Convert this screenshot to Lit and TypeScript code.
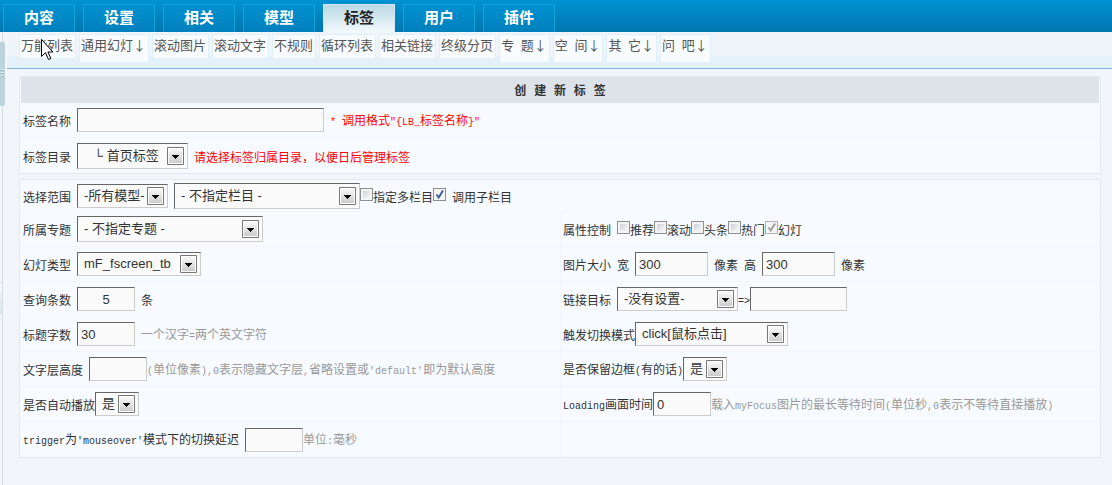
import { LitElement, html, css, svg } from "lit";
import { customElement, state } from "lit/decorators.js";
import { classMap } from "lit/directives/class-map.js";

const NAV = ["内容", "设置", "相关", "模型", "标签", "用户", "插件"];
const SUB = ["万能列表", "通用幻灯↓", "滚动图片", "滚动文字", "不规则", "循环列表", "相关链接", "终级分页", "专 题↓", "空 间↓", "其 它↓", "问 吧↓"];
const FLAGS = ["推荐", "滚动", "头条", "热门", "幻灯"];

const mix = (text: string) =>
  text.split(/([\x20-\x7e]+)/).filter(Boolean).map((run) =>
    /^[\x20-\x7e]+$/.test(run) ? html`<span class="mono">${run}</span>` : run);

@customElement("app-root")
export class AppRoot extends LitElement {
  static styles = css`
    :host {
      display: block;
      min-height: 100vh;
      background: #f2f6fb;
      color: #333;
      font: 12px/16px "Noto Sans CJK SC", sans-serif;
    }
    * { box-sizing: border-box; }
    .mono { font-family: "Liberation Mono", monospace; font-size: 10px; white-space: pre; }
    .top {
      display: flex;
      gap: 8px;
      height: 32px;
      padding: 4px 3px 0;
      background: linear-gradient(#0092d2, #0077b0);
    }
    .tab {
      width: 72px;
      height: 28px;
      border: 1px solid #10a3dc;
      border-bottom: 0;
      background: linear-gradient(#0090d0, #0080bc);
      color: #fff;
      font-size: 15px;
      font-weight: 700;
      line-height: 24px;
      text-align: center;
      text-decoration: none;
    }
    .tab.on {
      border-color: #d4e8f0;
      background: linear-gradient(#b9d9e4, #f3f8fc);
      color: #222;
    }
    .body { display: flex; min-height: calc(100vh - 32px); }
    .rail {
      position: relative;
      flex: none;
      width: 7px;
      background: linear-gradient(90deg, #f2f6fb 2px, #d5dde3 2px, #d5dde3 3px, #f2f6fb 3px);
    }
    .thumb {
      position: absolute;
      left: 0;
      top: 10px;
      width: 5px;
      height: 64px;
      border-radius: 0 2px 2px 0;
      background:
        repeating-linear-gradient(#e6f0f3 0 1px, #9fb9c2 1px 2px, #bdd3da 2px 3px) 1px 27px / 3px 8px no-repeat,
        #bdd3da;
    }
    .stub {
      position: absolute;
      left: 0;
      top: 250px;
      width: 2px;
      height: 32px;
      border: solid #d5dde3;
      border-width: 1px 0;
      background: linear-gradient(#f4f8fb, #dde6ea);
    }
    .main { flex: 1; min-width: 0; }
    .sub {
      display: flex;
      align-items: flex-start;
      gap: 3px;
      height: 37px;
      padding: 2px 12px 0;
      border-bottom: 1px solid #7db4d5;
      background: linear-gradient(#f0f5fc 24px, #e4f1fb 24px);
    }
    .sub a {
      height: 25px;
      padding: 0 2px 0 1px;
      border: 1px solid #e0f0fa;
      background: #f9fcff;
      color: #555;
      font-size: 13px;
      line-height: 20px;
      white-space: nowrap;
      text-decoration: none;
    }
    .sub a.menu { height: 29px; }
    .sub .mono { font-size: 11px; }
    form { padding: 7px 11px 0 12px; }
    .panel {
      margin-bottom: 5px;
      border: 1px solid #e2eaf0;
      background: #f7fbff;
    }
    h1 {
      margin: 0 1px;
      background: #dce3e9;
      font-size: 12px;
      line-height: 26px;
      text-align: center;
    }
    h1 .mono { font-size: 13px; line-height: 16px; }
    .row {
      display: grid;
      grid-template-columns: 1fr 1fr;
      height: 35px;
      border-bottom: 1px solid #f2f6fb;
    }
    .row:last-child { border-bottom: 0; }
    .row.wide { grid-template-columns: 1fr; }
    .row.short { height: 32px; }
    .cell { display: flex; align-items: center; padding-left: 3px; white-space: nowrap; }
    .cell + .cell { padding-left: 2px; border-left: 1px solid #f2f6fb; }
    .cell > label, .cell > .txt { padding-top: 2px; }
    .gap { margin-right: 6px; }
    .lead { margin-left: 6px; }
    .red { color: #f00; }
    .grey { color: #999; }
    input, select {
      margin: 0;
      border: 1px solid;
      border-color: #666 #ccc #ccc #666;
      border-radius: 0;
      background-color: #fafafa;
      color: #333;
      font: 13px/20px "Liberation Sans", "Noto Sans CJK SC", sans-serif;
      outline: 0;
    }
    input[type="text"] { height: 24px; padding: 0 3px; }
    input.center { text-align: center; }
    .w44 { width: 44px; }
    .w58 { width: 58px; }
    .w73 { width: 73px; }
    .w91 { width: 91px; }
    .w97 { width: 97px; }
    .w111 { width: 111px; }
    .w121 { width: 121px; }
    .w124 { width: 124px; }
    .w153 { width: 153px; }
    .w186 { width: 186px; }
    .w247 { width: 247px; }
    select {
      appearance: none;
      height: 24px;
      padding: 0 20px 0 6px;
      background-image:
        url("data:image/svg+xml,%3Csvg xmlns='http://www.w3.org/2000/svg' width='17' height='18'%3E%3Cdefs%3E%3ClinearGradient id='g' x2='0' y2='1'%3E%3Cstop stop-color='%23f8f8f8'/%3E%3Cstop offset='1' stop-color='%23ccc'/%3E%3C/linearGradient%3E%3C/defs%3E%3Cpath fill='%23fff' stroke='%23777' d='M.5.5h16v17H.5z'/%3E%3Cpath fill='url(%23g)' d='M2 2h13v14H2z'/%3E%3Cpath d='M5 8h7v1H5zM6 9h5v1H6zM7 10h3v1H7zM8 11h1v1H8z'/%3E%3C/svg%3E");
      background-repeat: no-repeat;
      background-position: right 3px center;
    }
    select.tall { height: 26px; }
    input[type="checkbox"] {
      appearance: none;
      flex: none;
      width: 13px;
      height: 13px;
      margin-bottom: 3px;
      border: 1px solid #8e8f8f;
      background: linear-gradient(135deg, #cdd2d8, #f6f6f6) 50% / 7px 7px no-repeat #f4f4f4;
    }
    input[type="checkbox"]:disabled { border-color: #b1b1b1; }
    input[type="checkbox"]:checked {
      background: url("data:image/svg+xml,%3Csvg xmlns='http://www.w3.org/2000/svg' width='11' height='11'%3E%3Cpath fill='none' stroke='%23405f9e' stroke-width='2' d='M2.5 5.5l2.2 3L9 1.5'/%3E%3C/svg%3E") #f4f4f4;
    }
    input[type="checkbox"]:checked:disabled {
      background: url("data:image/svg+xml,%3Csvg xmlns='http://www.w3.org/2000/svg' width='11' height='11'%3E%3Cpath fill='none' stroke='%23a0a0a0' stroke-width='2' d='M2.5 5.5l2.2 3L9 1.5'/%3E%3C/svg%3E") #f4f4f4;
    }
    .pointer { position: absolute; left: 41px; top: 38px; pointer-events: none; }
  `;

  @state() private active = "标签";

  private select(id: string, cls: string, value: string) {
    return html`<select id=${id} class=${cls}><option>${value}</option></select>`;
  }

  render() {
    return html`
      <nav class="top">
        ${NAV.map((n) => html`<a href="#" class=${classMap({ tab: true, on: n === this.active })}
          @click=${() => (this.active = n)}>${n}</a>`)}
      </nav>
      <div class="body">
        <div class="rail"><div class="thumb"></div><div class="stub"></div></div>
        <main class="main">
          <nav class="sub">
            ${SUB.map((s) => html`<a href="#" class=${classMap({ menu: s.endsWith("↓") })}>${mix(s)}</a>`)}
          </nav>
          <form>
            <section class="panel">
              <h1>${mix("创 建 新 标 签")}</h1>
              <div class="row wide"><div class="cell">
                <label class="gap" for="name">标签名称</label>
                <input id="name" type="text" class="w247">
                <span class="txt lead red">${mix('* 调用格式"{LB_标签名称}"')}</span>
              </div></div>
              <div class="row wide"><div class="cell">
                <label class="gap" for="dir">标签目录</label>
                ${this.select("dir", "tall w111", "\u00a0\u00a0\u2009└ 首页标签")}
                <span class="txt lead red">请选择标签归属目录，以便日后管理标签</span>
              </div></div>
            </section>
            <section class="panel">
              <div class="row wide short"><div class="cell">
                <label class="gap" for="model">选择范围</label>
                ${this.select("model", "w91 gap", "-所有模型-")}
                ${this.select("column", "tall w186", "- 不指定栏目 -")}
                <input id="multi" type="checkbox"><label for="multi">指定多栏目</label>
                <input id="child" type="checkbox" checked><label class="lead" for="child">调用子栏目</label>
              </div></div>
              <div class="row">
                <div class="cell">
                  <label class="gap" for="topic">所属专题</label>
                  ${this.select("topic", "tall w186", "- 不指定专题 -")}
                </div>
                <div class="cell">
                  <span class="txt gap">属性控制</span>
                  ${FLAGS.map((f, i) => html`<input id="flag${i}" type="checkbox" ?checked=${i === 4}
                    ?disabled=${i === 4}><label for="flag${i}">${f}</label>`)}
                </div>
              </div>
              <div class="row">
                <div class="cell">
                  <label class="gap" for="type">幻灯类型</label>
                  ${this.select("type", "w124", "mF_fscreen_tb")}
                </div>
                <div class="cell">
                  <span class="txt gap">图片大小</span><label class="gap" for="pw">宽</label>
                  <input id="pw" type="text" class="w73" value="300">
                  <span class="txt lead gap">像素</span><label class="gap" for="ph">高</label>
                  <input id="ph" type="text" class="w73" value="300">
                  <span class="txt lead">像素</span>
                </div>
              </div>
              <div class="row">
                <div class="cell">
                  <label class="gap" for="count">查询条数</label>
                  <input id="count" type="text" class="w58 center" value="5">
                  <span class="txt lead">条</span>
                </div>
                <div class="cell">
                  <label class="gap" for="target">链接目标</label>
                  ${this.select("target", "w121", "-没有设置-")}
                  <label for="custom">${mix("=>")}</label>
                  <input id="custom" type="text" class="w97">
                </div>
              </div>
              <div class="row">
                <div class="cell">
                  <label class="gap" for="chars">标题字数</label>
                  <input id="chars" type="text" class="w58" value="30">
                  <span class="txt lead grey">${mix("一个汉字=两个英文字符")}</span>
                </div>
                <div class="cell">
                  <label for="trig">触发切换模式</label>
                  ${this.select("trig", "w153", "click[鼠标点击]")}
                </div>
              </div>
              <div class="row">
                <div class="cell">
                  <label class="gap" for="layer">文字层高度</label>
                  <input id="layer" type="text" class="w58">
                  <span class="txt grey">${mix("(单位像素),0表示隐藏文字层,省略设置或'default'即为默认高度")}</span>
                </div>
                <div class="cell">
                  <label for="frame">${mix("是否保留边框(有的话)")}</label>
                  ${this.select("frame", "w44", "是")}
                </div>
              </div>
              <div class="row">
                <div class="cell">
                  <label for="auto">是否自动播放</label>
                  ${this.select("auto", "w44", "是")}
                </div>
                <div class="cell">
                  <label for="load">${mix("Loading画面时间")}</label>
                  <input id="load" type="text" class="w58" value="0">
                  <span class="txt grey">${mix("载入myFocus图片的最长等待时间(单位秒,0表示不等待直接播放)")}</span>
                </div>
              </div>
              <div class="row">
                <div class="cell">
                  <label class="gap" for="delay">${mix("trigger为'mouseover'模式下的切换延迟")}</label>
                  <input id="delay" type="text" class="w58">
                  <span class="txt grey">${mix("单位:毫秒")}</span>
                </div>
                <div class="cell"></div>
              </div>
            </section>
          </form>
        </main>
      </div>
      <svg class="pointer" width="13" height="23" viewBox="0 0 13 23" aria-hidden="true">
        ${svg`<path fill="#fff" stroke="#000" d="M.5 1.5v17l4-3.8 3 6.8 2.4-1-3-6.5h5z"/>`}
      </svg>
    `;
  }
}
